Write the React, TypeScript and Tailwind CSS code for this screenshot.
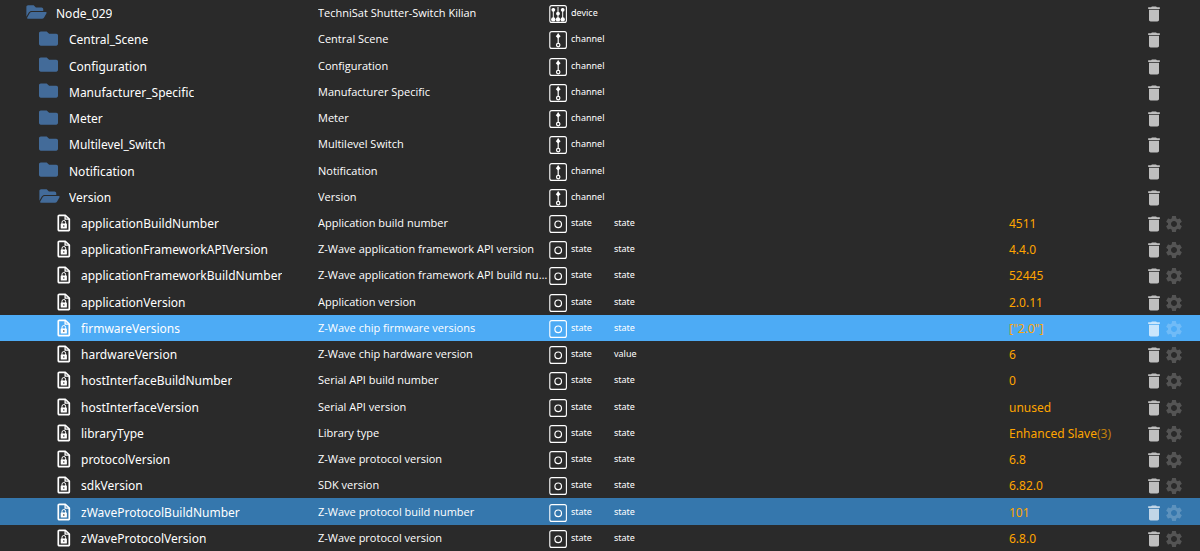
import { FaFolder, FaFolderOpen } from 'react-icons/fa';
import { MdDelete, MdSettings } from 'react-icons/md';

type Kind = 'device' | 'channel' | 'state';

interface Item {
  id: string;
  name: string;
  kind: Kind;
  open?: boolean;
  role?: string;
  value?: string;
  raw?: string;
  highlight?: 'selected' | 'hover';
}

const items: Item[] = [
  { id: 'Node_029', name: 'TechniSat Shutter-Switch Kilian', kind: 'device', open: true },
  { id: 'Central_Scene', name: 'Central Scene', kind: 'channel' },
  { id: 'Configuration', name: 'Configuration', kind: 'channel' },
  { id: 'Manufacturer_Specific', name: 'Manufacturer Specific', kind: 'channel' },
  { id: 'Meter', name: 'Meter', kind: 'channel' },
  { id: 'Multilevel_Switch', name: 'Multilevel Switch', kind: 'channel' },
  { id: 'Notification', name: 'Notification', kind: 'channel' },
  { id: 'Version', name: 'Version', kind: 'channel', open: true },
  { id: 'applicationBuildNumber', name: 'Application build number', kind: 'state', role: 'state', value: '4511' },
  { id: 'applicationFrameworkAPIVersion', name: 'Z-Wave application framework API version', kind: 'state', role: 'state', value: '4.4.0' },
  { id: 'applicationFrameworkBuildNumber', name: 'Z-Wave application framework API build number', kind: 'state', role: 'state', value: '52445' },
  { id: 'applicationVersion', name: 'Application version', kind: 'state', role: 'state', value: '2.0.11' },
  { id: 'firmwareVersions', name: 'Z-Wave chip firmware versions', kind: 'state', role: 'state', value: '["2.0"]', highlight: 'selected' },
  { id: 'hardwareVersion', name: 'Z-Wave chip hardware version', kind: 'state', role: 'value', value: '6' },
  { id: 'hostInterfaceBuildNumber', name: 'Serial API build number', kind: 'state', role: 'state', value: '0' },
  { id: 'hostInterfaceVersion', name: 'Serial API version', kind: 'state', role: 'state', value: 'unused' },
  { id: 'libraryType', name: 'Library type', kind: 'state', role: 'state', value: 'Enhanced Slave', raw: '(3)' },
  { id: 'protocolVersion', name: 'Z-Wave protocol version', kind: 'state', role: 'state', value: '6.8' },
  { id: 'sdkVersion', name: 'SDK version', kind: 'state', role: 'state', value: '6.82.0' },
  { id: 'zWaveProtocolBuildNumber', name: 'Z-Wave protocol build number', kind: 'state', role: 'state', value: '101', highlight: 'hover' },
  { id: 'zWaveProtocolVersion', name: 'Z-Wave protocol version', kind: 'state', role: 'state', value: '6.8.0' },
];

const rowColors = {
  selected: 'bg-[#4dabf5]',
  hover: 'bg-[#3577ad]',
};

const indents = {
  device: 'pl-[26px]',
  channel: 'pl-[39px]',
  state: 'pl-[57px]',
};

function LockedFile() {
  return (
    <svg viewBox="0 0 14 18" className="h-[18px] w-[14px]" fill="none" stroke="currentColor">
      <path d="M2.300 1.300h6L12.300 5v10.700a1 1 0 0 1-1 1h-9a1 1 0 0 1-1-1V2.300a1 1 0 0 1 1-1z" strokeWidth="1.700" strokeLinejoin="round" />
      <path d="M8.100 1.500v3.700h4" strokeWidth="1.300" />
      <path d="M5 10V8.300a1.800 1.800 0 0 1 3.600 0V10" strokeWidth="1" />
      <rect x="3.700" y="9.500" width="6.200" height="5" rx=".6" fill="currentColor" stroke="none" />
      <circle cx="6.800" cy="12" r=".8" fill="#2a2a2a" stroke="none" />
    </svg>
  );
}

function KindIcon({ kind }: { kind: Kind }) {
  return (
    <svg viewBox="0 0 18 18" className="mt-0.5 size-[18px] shrink-0" fill="none" stroke="currentColor">
      <rect x=".8" y=".6" width="16.600" height="16.800" rx="2" strokeWidth="1.100" />
      {kind === 'state' && <circle cx="9.200" cy="9.300" r="3.300" strokeWidth="1.200" />}
      {kind === 'channel' && (
        <>
          <path d="M9.200 2.500v10" strokeWidth="1.200" />
          <path d="M9.200 2.400l2.400 2.800-2.400 2.200-2.400-2.200z" fill="currentColor" stroke="none" />
          <circle cx="9.200" cy="14.100" r="1.700" strokeWidth="1.200" />
        </>
      )}
      {kind === 'device' && (
        <>
          <path d="M4.300 3v12M9 2v13M13.700 3v12" strokeWidth="1" />
          <g fill="currentColor" stroke="none">
            <circle cx="4.300" cy="4.800" r="1.900" />
            <circle cx="9" cy="8.600" r="1.900" />
            <circle cx="13.700" cy="4.800" r="1.900" />
            <circle cx="4.300" cy="14.400" r="2.200" />
            <circle cx="9" cy="14.400" r="2.200" />
            <circle cx="13.700" cy="14.400" r="2.200" />
          </g>
        </>
      )}
    </svg>
  );
}

function Row({ item }: { item: Item }) {
  const isState = item.kind === 'state';

  return (
    <tr className={item.highlight ? rowColors[item.highlight] : ''}>
      <td className="p-0">
        <div className={`flex items-center ${indents[item.kind]}`}>
          <span className={isState ? 'w-6 shrink-0' : 'w-[30px] shrink-0 pb-0.5 text-[#436b99]'}>
            {isState && <LockedFile />}
            {!isState && item.open && <FaFolderOpen className="h-[18px] w-[21px]" />}
            {!isState && !item.open && <FaFolder className="size-[19px]" />}
          </span>
          <span className="truncate pt-0.5 font-['Noto_Sans',sans-serif] text-[12px]">{item.id}</span>
        </div>
      </td>
      <td className="truncate p-0 text-[11px]">{item.name}</td>
      <td className="p-0">
        <div className="flex items-center gap-1 font-['Noto_Sans',sans-serif] text-[9px]">
          <KindIcon kind={item.kind} />
          {item.kind}
        </div>
      </td>
      <td className="p-0 font-['Noto_Sans',sans-serif] text-[9px]">{item.role}</td>
      <td className="p-0 pt-0.5 font-['Noto_Sans',sans-serif] text-[12px] text-[#ffa500]">
        {item.value}
        {item.raw && <span className="opacity-70">{item.raw}</span>}
      </td>
      <td className="p-0">
        <div className="flex pt-0.5">
          <button type="button" aria-label={`Delete ${item.id}`} className="text-white/70">
            <MdDelete className="size-5" />
          </button>
          {isState && (
            <button type="button" aria-label={`Settings of ${item.id}`} className="text-white/20">
              <MdSettings className="size-5" />
            </button>
          )}
        </div>
      </td>
    </tr>
  );
}

export default function App() {
  return (
    <div className="min-h-screen bg-[#2a2a2a] font-['Open_Sans','Noto_Sans',sans-serif] text-white">
      <table className="h-screen w-full table-fixed border-collapse leading-5">
        <colgroup>
          <col className="w-[318px]" />
          <col className="w-[231px]" />
          <col className="w-[65px]" />
          <col />
          <col className="w-[135px]" />
          <col className="w-14" />
        </colgroup>
        <tbody>
          {items.map(item => (
            <Row key={item.id} item={item} />
          ))}
        </tbody>
      </table>
    </div>
  );
}
